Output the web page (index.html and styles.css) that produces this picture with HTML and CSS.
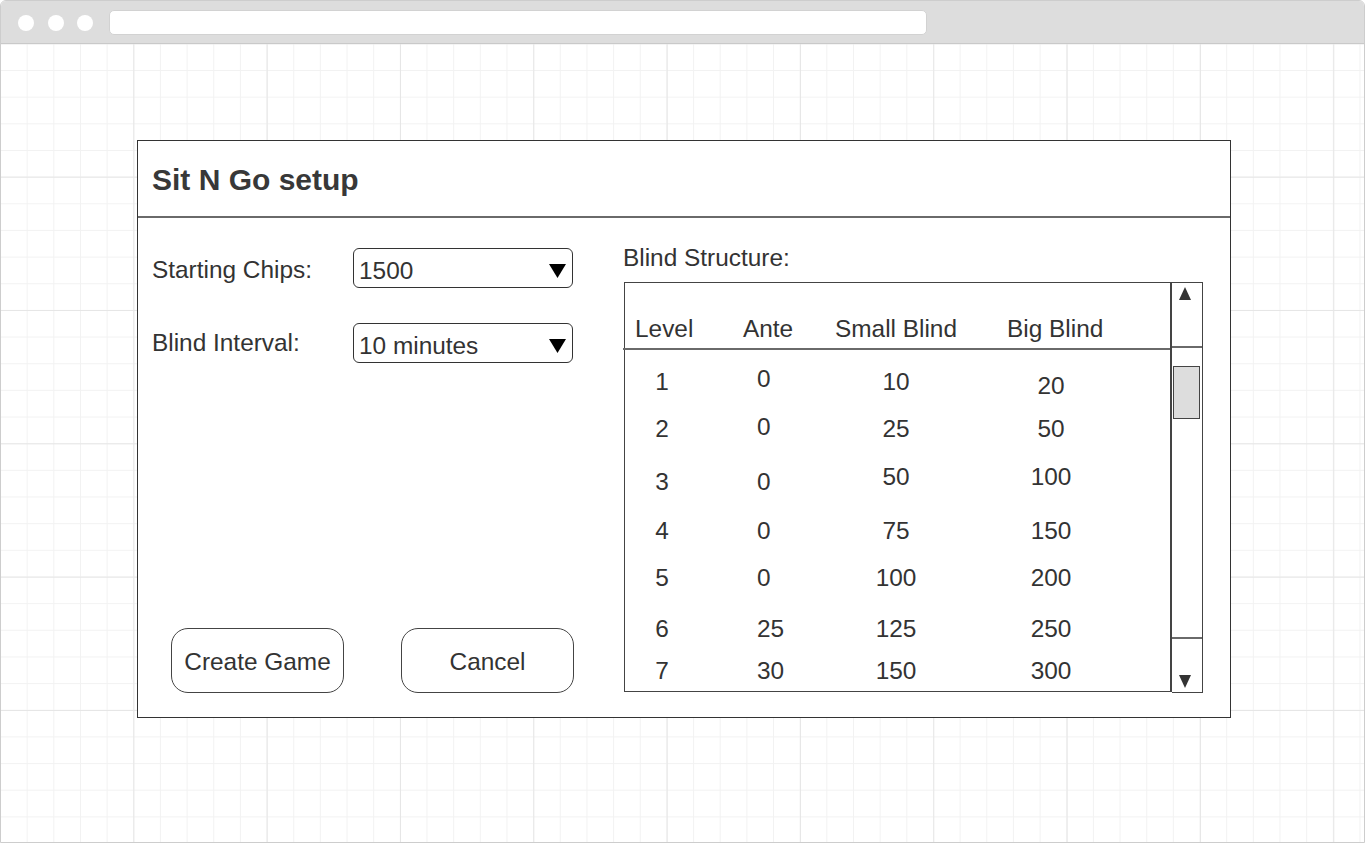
FILE: index.html
```html
<!DOCTYPE html>
<html lang="en">
<head>
<meta charset="utf-8">
<title>Sit N Go setup</title>
<link rel="stylesheet" href="styles.css">
</head>
<body>
<div class="window">
  <div class="chrome">
    <span class="dot"></span>
    <span class="dot"></span>
    <span class="dot"></span>
    <div class="address"></div>
  </div>
  <div class="canvas">
    <section class="dialog">
      <header class="dialog-head">
        <h1 class="title">Sit N Go setup</h1>
      </header>
      <div class="dialog-body">
        <div class="setup">
          <div class="field">
            <span class="label label-low">Starting Chips:</span>
            <div class="select">
              <span class="select-value">1500</span>
              <svg class="caret" width="17" height="14" viewBox="0 0 17 14"><polygon points="0,0 17,0 8.5,14" fill="#000"/></svg>
            </div>
          </div>
          <div class="field">
            <span class="label">Blind Interval:</span>
            <div class="select">
              <span class="select-value">10 minutes</span>
              <svg class="caret" width="17" height="14" viewBox="0 0 17 14"><polygon points="0,0 17,0 8.5,14" fill="#000"/></svg>
            </div>
          </div>
          <div class="actions">
            <button class="btn">Create Game</button>
            <button class="btn">Cancel</button>
          </div>
        </div>
        <div class="blinds">
          <div class="blinds-label">Blind Structure:</div>
          <div class="listbox">
            <div class="table">
              <div class="thead">
                <span>Level</span>
                <span>Ante</span>
                <span>Small Blind</span>
                <span>Big Blind</span>
              </div>
              <div class="tbody">
                <span class="c-level">1</span><span class="c-ante up3">0</span><span class="c-small">10</span><span class="c-big dn4">20</span>
                <span class="c-level">2</span><span class="c-ante up2">0</span><span class="c-small">25</span><span class="c-big">50</span>
                <span class="c-level dn2">3</span><span class="c-ante dn2">0</span><span class="c-small up3">50</span><span class="c-big up3">100</span>
                <span class="c-level">4</span><span class="c-ante">0</span><span class="c-small">75</span><span class="c-big">150</span>
                <span class="c-level">5</span><span class="c-ante">0</span><span class="c-small">100</span><span class="c-big">200</span>
                <span class="c-level">6</span><span class="c-ante">25</span><span class="c-small">125</span><span class="c-big">250</span>
                <span class="c-level">7</span><span class="c-ante">30</span><span class="c-small">150</span><span class="c-big">300</span>
              </div>
            </div>
            <div class="scrollbar">
              <div class="sb-up">
                <svg width="12" height="13" viewBox="0 0 12 13"><polygon points="6,0 12,13 0,13" fill="#333"/></svg>
              </div>
              <div class="sb-track">
                <div class="sb-thumb"></div>
              </div>
              <div class="sb-down">
                <svg width="12" height="13" viewBox="0 0 12 13"><polygon points="0,0 12,0 6,13" fill="#333"/></svg>
              </div>
            </div>
          </div>
        </div>
      </div>
    </section>
  </div>
</div>
</body>
</html>
```

FILE: styles.css
```css
* {
  box-sizing: border-box;
}

html,
body {
  margin: 0;
  padding: 0;
  background: #fff;
}

body {
  font-family: "Liberation Sans", Arial, sans-serif;
  color: #333;
}

.window {
  width: 1365px;
  height: 843px;
  border: 1px solid #cdcdcd;
  border-radius: 6px 6px 0 0;
  overflow: hidden;
  display: flex;
  flex-direction: column;
}

.chrome {
  height: 43px;
  flex: none;
  background: #dddddd;
  border-bottom: 1px solid #c9c9c9;
  display: flex;
  align-items: center;
  padding-left: 17px;
  gap: 13.5px;
}

.dot {
  width: 16px;
  height: 16px;
  border-radius: 50%;
  background: #fff;
  margin-top: 1px;
}

.address {
  margin-left: 2px;
  width: 818px;
  height: 25px;
  background: #fff;
  border: 1px solid #d2d2d2;
  border-radius: 5px;
}

.canvas {
  flex: 1;
  padding: 96px 0 0 136px;
  background-color: #fff;
  background-image:
    linear-gradient(to right, #e6e6e6 1px, transparent 1px),
    linear-gradient(to bottom, #e6e6e6 1px, transparent 1px),
    linear-gradient(to right, #f2f2f2 1px, transparent 1px),
    linear-gradient(to bottom, #f2f2f2 1px, transparent 1px);
  background-size:
    133.333px 133.333px,
    133.333px 133.333px,
    26.667px 26.667px,
    26.667px 26.667px;
  background-position: -1px -0.67px;
}

.dialog {
  width: 1094px;
  height: 578px;
  border: 1px solid #333;
  background: #fff;
  display: flex;
  flex-direction: column;
}

.dialog-head {
  height: 77px;
  flex: none;
  border-bottom: 2px solid #6a6a6a;
  display: flex;
  align-items: center;
  padding: 2px 0 0 14px;
}

.title {
  margin: 0;
  font-size: 30px;
  font-weight: bold;
  line-height: 34px;
  color: #383838;
}

.dialog-body {
  flex: 1;
  display: flex;
  gap: 49px;
  padding: 0 27px 24px 14px;
  font-size: 24.4px;
  line-height: 28px;
}

.setup {
  width: 422px;
  display: flex;
  flex-direction: column;
  padding-top: 30px;
  gap: 35px;
}

.field {
  height: 40px;
  display: flex;
  align-items: center;
}

.label {
  width: 201px;
}

.label-low {
  padding-top: 4px;
}

.select {
  width: 220px;
  height: 40px;
  border: 1px solid #333;
  border-radius: 6px;
  display: flex;
  align-items: center;
  justify-content: space-between;
  padding: 6px 6px 0 5px;
}

.caret {
  display: block;
}

.actions {
  margin-top: auto;
  display: flex;
  gap: 57px;
  padding-left: 19px;
}

.btn {
  width: 173px;
  height: 65px;
  border: 1px solid #444;
  border-radius: 17px;
  background: #fff;
  font-family: "Liberation Sans", Arial, sans-serif;
  font-size: 24.4px;
  line-height: 28px;
  color: #333;
  padding: 3px 0 0;
}

.blinds {
  width: 580px;
  padding-top: 26px;
}

.listbox {
  margin-top: 10px;
  margin-left: 1px;
  display: flex;
  align-items: flex-start;
}

.table {
  width: 548px;
  height: 410px;
  border: 1px solid #444;
  border-right-width: 2px;
  display: flex;
  flex-direction: column;
}

.thead {
  height: 67px;
  flex: none;
  margin-left: -2px;
  padding: 32px 0 0 12px;
  border-bottom: 2px solid #6a6a6a;
  display: grid;
  grid-template-columns: 108px 92px 172px auto;
}

.tbody {
  display: grid;
  grid-template-columns: 74px 107px 180px 130px;
  grid-template-rows: 48px 46px 56px 45px 50px 52px 31px;
  padding-top: 8px;
  align-items: center;
}

.c-level,
.c-small,
.c-big {
  text-align: center;
}

.c-ante {
  padding-left: 58px;
}

.up3 {
  padding-bottom: 6px;
}

.up2 {
  padding-bottom: 4px;
}

.dn2 {
  padding-top: 4px;
}

.dn4 {
  padding-top: 8px;
}

.scrollbar {
  width: 31px;
  height: 411px;
  border: 1px solid #444;
  border-left: none;
  display: flex;
  flex-direction: column;
}

.sb-up {
  height: 65px;
  flex: none;
  border-bottom: 2px solid #6a6a6a;
  padding: 4px 0 0 7px;
}

.sb-up svg,
.sb-down svg {
  display: block;
}

.sb-track {
  flex: 1;
  padding: 18px 0 0 1px;
}

.sb-thumb {
  width: 27px;
  height: 53px;
  background: #dddddd;
  border: 1px solid #444;
}

.sb-down {
  height: 55px;
  flex: none;
  border-top: 2px solid #6a6a6a;
  padding: 36px 0 0 7px;
}
```
